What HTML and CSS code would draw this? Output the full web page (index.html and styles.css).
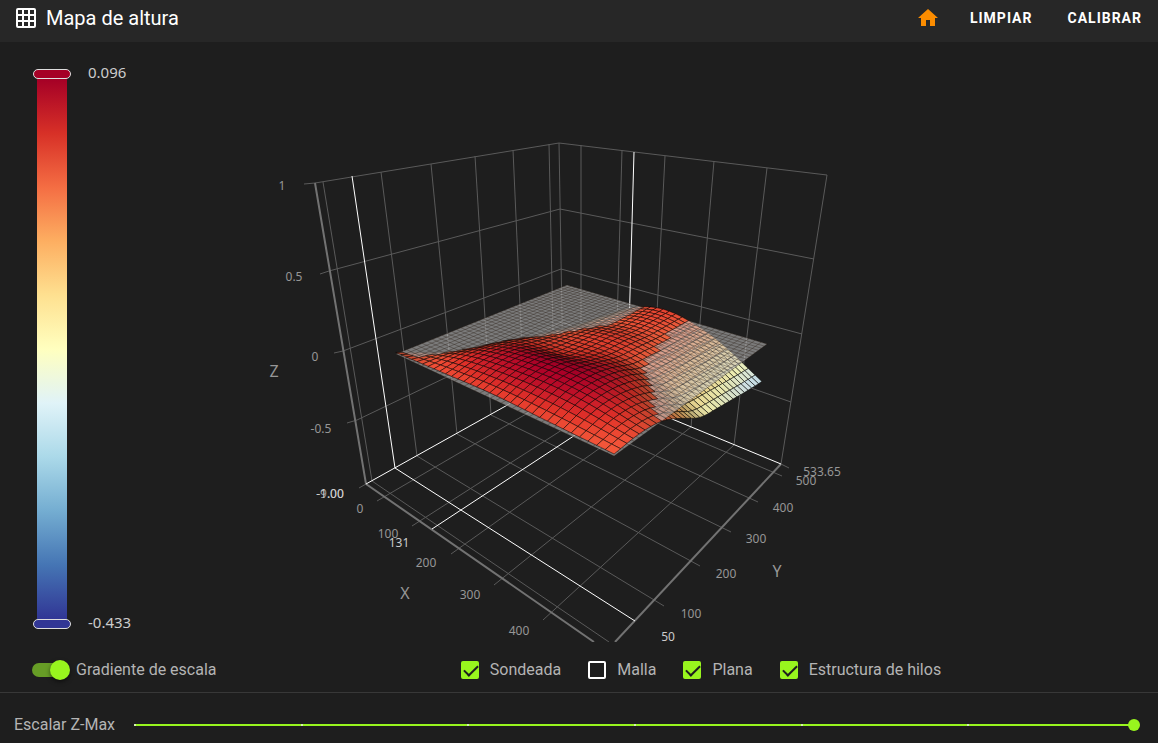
FILE: index.html
```html
<!DOCTYPE html>
<html lang="es">
<head>
    <meta charset="UTF-8">
    <meta name="viewport" content="width=device-width, initial-scale=1.0">
    <title>Mapa de altura</title>
    <link rel="stylesheet" href="styles.css">
</head>
<body>
    <header class="toolbar">
        <svg class="grid-icon" viewBox="0 0 20 20" aria-hidden="true">
            <rect x="1" y="1" width="18" height="18" rx="1"/>
            <path d="M7 1V19M13 1V19M1 7H19M1 13H19"/>
        </svg>
        <h1>Mapa de altura</h1>
        <button class="home-button" aria-label="Home">
            <svg viewBox="0 0 24 24"><path d="M10 20V14H14V20H19V12H22L12 3L2 12H5V20H10Z"/></svg>
        </button>
        <button>Limpiar</button>
        <button>Calibrar</button>
    </header>

    <main class="chart">
        <div class="scale">
            <div class="scale-bar">
                <span class="handle handle-max"></span>
                <span class="gradient"></span>
                <span class="handle handle-min"></span>
            </div>
            <div class="scale-values">
                <span>0.096</span>
                <span>-0.433</span>
            </div>
        </div>
        <svg class="scene" id="scene" viewBox="160 42 998 600">
            <g id="grid" class="grid"></g>
            <g id="surfaceLow"></g>
            <g id="plane"></g>
            <g id="surfaceHigh"></g>
            <g id="labels" class="labels"></g>
        </svg>
    </main>

    <div class="controls">
        <label class="switch">
            <input type="checkbox" checked>
            Gradiente de escala
        </label>
        <div class="checks">
            <label><input type="checkbox" checked>Sondeada</label>
            <label><input type="checkbox">Malla</label>
            <label><input type="checkbox" checked>Plana</label>
            <label><input type="checkbox" checked>Estructura de hilos</label>
        </div>
    </div>

    <div class="slider-row">
        <label for="zmax">Escalar Z-Max</label>
        <div class="slider">
            <input type="range" id="zmax" min="0" max="6" value="6">
        </div>
    </div>

    <script src="script.js"></script>
</body>
</html>
```
FILE: styles.css
```css
* {
    box-sizing: border-box;
}
body {
    margin: 0;
    min-height: 100vh;
    display: flex;
    flex-direction: column;
    background-color: #1e1e1e;
    color: #b4b4b4;
    font: 16px/24px Roboto, sans-serif;
}
.toolbar {
    display: flex;
    align-items: center;
    height: 42px;
    padding: 0 8px 6px 16px;
    background-color: #272727;
    color: #fff;
}
.grid-icon {
    width: 20px;
    height: 20px;
    fill: none;
    stroke: #fff;
    stroke-width: 2;
}
h1 {
    flex: 1;
    margin: 0 0 0 10px;
    font-size: 20px;
    font-weight: 400;
}
.toolbar button {
    margin-left: 19px;
    padding: 0 8px;
    border: none;
    background: none;
    color: #fff;
    font: 700 14px/24px Roboto, sans-serif;
    letter-spacing: 1px;
    text-transform: uppercase;
    cursor: pointer;
}
.toolbar .home-button {
    height: 24px;
    padding: 0;
    margin-right: 3px;
}
.home-button svg {
    display: block;
    width: 24px;
    height: 24px;
    fill: #fb8c00;
}
.chart {
    flex: 1;
    display: flex;
}
.scale {
    display: flex;
    width: 160px;
    padding: 27px 0 13px 33px;
}
.scale-bar {
    display: flex;
    flex-direction: column;
    align-items: center;
    width: 38px;
}
.gradient {
    flex: 1;
    width: 30px;
    background: linear-gradient(#a50026, #d73027, #f46d43, #fdae61, #fee090, #ffffbf, #e0f3f8, #abd9e9, #74add1, #4575b4, #313695);
}
.handle {
    width: 38px;
    height: 10px;
    border: 1px solid #ddd;
    border-radius: 5px;
}
.handle-max {
    background-color: #a50026;
}
.handle-min {
    background-color: #313695;
}
.scale-values {
    display: flex;
    flex-direction: column;
    justify-content: space-between;
    margin: -8px 0 -4px 17px;
    font: 15px/22px "Noto Sans", sans-serif;
    color: #ccc;
}
.scene {
    flex: 1;
    min-width: 0;
    display: block;
}
.grid path {
    fill: none;
    stroke: #5a5a5a;
}
.grid .axis {
    stroke: #727272;
    stroke-width: 2;
}
.grid .pointer {
    stroke: #fff;
}
.labels {
    fill: #969696;
    font: 12px "Noto Sans", sans-serif;
    text-anchor: middle;
}
.labels .name {
    font-size: 16px;
}
.labels .bright {
    fill: #ccc;
}
.cell {
    stroke: rgba(0, 0, 0, 0.5);
}
.plane-fill {
    fill: rgba(200, 200, 200, 0.55);
}
.plane-wire {
    fill: none;
    stroke: rgba(40, 30, 20, 0.35);
}
.controls {
    display: flex;
    align-items: center;
    min-height: 50px;
    padding: 6px 0 0;
}
.controls label {
    display: flex;
    align-items: center;
}
.switch {
    width: 244px;
    padding-left: 32px;
}
.switch input {
    appearance: none;
    position: relative;
    width: 36px;
    height: 14px;
    margin: 0 8px 0 0;
    border-radius: 7px;
    background-color: #679d26;
}
.switch input::after {
    content: "";
    position: absolute;
    top: -3px;
    right: -2px;
    width: 20px;
    height: 20px;
    border-radius: 50%;
    background-color: #98f51e;
    box-shadow: 0 2px 4px rgba(0, 0, 0, 0.5);
}
.checks {
    flex: 1;
    display: flex;
    justify-content: center;
    gap: 27px;
}
.checks input {
    appearance: none;
    width: 18px;
    height: 18px;
    margin: 0 11px 0 0;
    border: 2px solid #fff;
    border-radius: 2px;
}
.checks input:checked {
    border-color: #98f51e;
    background-color: #98f51e;
}
.checks input:checked::after {
    content: "";
    display: block;
    width: 12px;
    height: 6px;
    margin: 2px 0 0 1px;
    border: solid #1e1e1e;
    border-width: 0 0 2px 2px;
    transform: rotate(-45deg);
}
.slider-row {
    display: flex;
    align-items: center;
    min-height: 51px;
    padding: 14px 24px 0 14px;
    border-top: 1px solid #383838;
}
.slider {
    flex: 1;
    height: 2px;
    margin-left: 19px;
    background:
        repeating-linear-gradient(to right, #d5f0b0 0 2px, transparent 2px calc(100% / 6)),
        #98f51e;
}
.slider input {
    appearance: none;
    display: block;
    width: calc(100% + 12px);
    height: 12px;
    margin: -5px -6px;
    background: none;
}
.slider input::-webkit-slider-thumb {
    appearance: none;
    width: 12px;
    height: 12px;
    border-radius: 50%;
    background-color: #98f51e;
}
```
FILE: script.js
```js
const SVG_NS = 'http://www.w3.org/2000/svg';

// Box lines: walls, floor and tick marks
const lines = [
    // top rim and wall levels
    'M315 183L559 143L827 175', 'M329 271L560 209L814 259',
    'M343 351L561 269L802 334', 'M357 420L562 322L791 402',
    'M559 143L563 374', 'M827 175L781 464',
    // left wall
    'M323 182L372 481', 'M381 172L417 456', 'M431 164L457 434',
    'M475 156L491 415', 'M513 150L524 396', 'M549 144L554 379',
    // right wall
    'M581 145L581 382', 'M622 150L615 396', 'M665 156L652 411',
    'M714 161L691 427', 'M767 168L734 445',
    // floor, with the ticks of the X axis
    'M377 501L581 382', 'M412 526L615 396', 'M451 554L652 411',
    'M494 585L691 427', 'M543 620L734 445',
    // floor, with the ticks of the Y axis
    'M554 379L782 476', 'M524 396L758 502', 'M491 415L731 532',
    'M457 434L700 566', 'M417 456L664 606', 'M372 481L609 642',
    'M781 464L789 468',
    // ticks of the Z axis
    'M304 184L315 183', 'M320 274L329 271', 'M334 353L343 351',
    'M347 423L357 420', 'M359 488L366 484'
];
const axes = ['M315 183L366 484L594 642', 'M781 464L615 642'];
const pointers = [
    'M366 484L563 374L781 464', 'M352 176L395 468L635 621',
    'M634 152L627 401L432 529'
];
const labels = [
    ['1', 282, 190], ['0.5', 294, 281], ['0', 315, 361], ['-0.5', 321, 433],
    ['-9.00', 330, 498], ['-1.00', 330, 498, 'bright'], ['0', 360, 513],
    ['100', 388, 538], ['131', 399, 547, 'bright'], ['200', 426, 567],
    ['300', 470, 599], ['400', 519, 635], ['50', 668, 641, 'bright'],
    ['100', 691, 618], ['200', 726, 578], ['300', 756, 543],
    ['400', 783, 512], ['500', 806, 485], ['533.65', 822, 476],
    ['Z', 274, 377, 'name'], ['X', 405, 599, 'name'], ['Y', 777, 577, 'name']
];

// Probed heights, rows along Y, columns along X
const probed = [
    [0.01, 0.02, 0.03, 0.02, 0.01],
    [-0.06, 0.045, 0.08, 0.075, 0.02],
    [-0.13, 0.035, 0.09, 0.085, 0.00],
    [-0.20, 0.01, 0.04, 0.06, -0.07],
    [-0.26, -0.03, 0.03, 0.005, -0.15],
    [-0.30, -0.06, 0.03, -0.012, -0.18],
    [-0.35, -0.09, 0.015, -0.025, -0.205],
    [-0.39, -0.11, 0.02, -0.035, -0.23],
    [-0.43, -0.13, 0.028, -0.045, -0.25]
];
const colors = [
    [49, 54, 149], [69, 117, 180], [116, 173, 209], [171, 217, 233],
    [224, 243, 248], [255, 255, 191], [254, 224, 144], [253, 174, 97],
    [244, 109, 67], [215, 48, 39], [165, 0, 38]
];
const Z_MIN = -0.433;
const Z_MAX = 0.096;
const CELLS = 32;
const PLANE_CELLS = 40;

function add(parent, tag, attrs, text) {
    const el = document.createElementNS(SVG_NS, tag);
    for (const key in attrs) el.setAttribute(key, attrs[key]);
    if (text) el.textContent = text;
    document.getElementById(parent).appendChild(el);
}

function spline(p, t) {
    const n = p.length - 1;
    const i = Math.min(n - 1, Math.floor(t * n));
    const f = t * n - i;
    const b = p[i], c = p[i + 1];
    const a = i > 0 ? p[i - 1] : 2 * b - c;
    const d = i + 2 <= n ? p[i + 2] : 2 * c - b;
    return b + 0.5 * f * (c - a + f * (2 * a - 5 * b + 4 * c - d + f * (3 * (b - c) + d - a)));
}

function height(u, v) {
    return spline(probed.map(row => spline(row, u)), v);
}

// Perspective projection of a point over the bed
function project(u, v, z) {
    const w = 1 - 0.24 * u + 0.2735 * v;
    const x = (70.7 * u + 326.1 * v + 396) / w;
    const y = (-7.4 * u + 8.95 * v + 354) / w;
    const lift = 155 * z / w;
    return [x + (x - 579) / (1708 - y) * lift, y - lift];
}

function colorOf(z, shade) {
    const t = Math.max(0, Math.min(0.999, (z - Z_MIN) / (Z_MAX - Z_MIN))) * 10;
    const i = Math.floor(t);
    const rgb = colors[i].map((c, k) => Math.round((c + (colors[i + 1][k] - c) * (t - i)) * shade));
    return `rgb(${rgb})`;
}

function points(list) {
    return list.map(p => p.map(n => n.toFixed(1)).join(',')).join(' ');
}

lines.forEach(d => add('grid', 'path', { d }));
axes.forEach(d => add('grid', 'path', { d, class: 'axis' }));
pointers.forEach(d => add('grid', 'path', { d, class: 'pointer' }));
labels.forEach(([text, x, y, cls]) => add('labels', 'text', { x, y, class: cls || '' }, text));

// Surface, drawn from back to front
for (let j = CELLS - 1; j >= 0; j--) {
    for (let i = 0; i < CELLS; i++) {
        const u = i / CELLS, v = j / CELLS, s = 1 / CELLS;
        const corners = [[u, v], [u + s, v], [u + s, v + s], [u, v + s]];
        const z = corners.map(c => height(c[0], c[1]));
        const mid = (z[0] + z[1] + z[2] + z[3]) / 4;
        const slope = (z[3] + z[2] - z[0] - z[1]) / 2 / s;
        const shade = Math.max(0.75, Math.min(1.05, 1 + slope * 0.5));
        add(mid > 0 ? 'surfaceHigh' : 'surfaceLow', 'polygon', {
            points: points(corners.map((c, k) => project(c[0], c[1], z[k]))),
            fill: colorOf(mid, shade),
            class: 'cell'
        });
    }
}

// Flat plane at zero
add('plane', 'polygon', {
    points: points([project(0, 0, 0), project(1, 0, 0), project(1, 1, 0), project(0, 1, 0)]),
    class: 'plane-fill'
});
for (let i = 0; i <= PLANE_CELLS; i++) {
    const t = i / PLANE_CELLS;
    add('plane', 'polyline', { points: points([project(t, 0, 0), project(t, 1, 0)]), class: 'plane-wire' });
    add('plane', 'polyline', { points: points([project(0, t, 0), project(1, t, 0)]), class: 'plane-wire' });
}
```
